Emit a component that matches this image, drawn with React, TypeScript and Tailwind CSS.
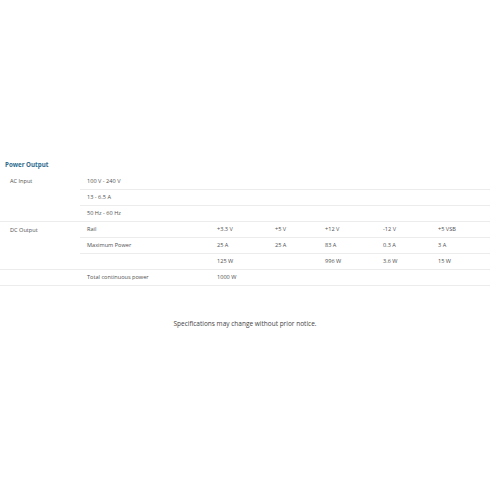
const rowLine = 'border-b border-[#ececec]';

function Row({ cells }: { cells: string[] }) {
  return (
    <tr className="h-[16px]">
      <td className={`${rowLine} pl-[7px]`}>{cells[0]}</td>
      {cells.slice(1).map((c, i) => (
        <td key={i} className={`${rowLine} pl-[7px] whitespace-nowrap`}>
          {c}
        </td>
      ))}
    </tr>
  );
}

export default function App() {
  return (
    <div className="w-[500px] h-[500px] bg-white text-[#505050] font-['Open_Sans',sans-serif]">
      <div className="pt-[159px] pl-[5px] text-[6.2px] font-bold text-[#2e6a8c] leading-[12px]">Power Output</div>
      <table className="mt-[2px] w-[490px] border-collapse text-[5.6px] leading-[8px] table-fixed">
        <colgroup>
          <col className="w-[80px]" />
          <col className="w-[130px]" />
          <col className="w-[58px]" />
          <col className="w-[50px]" />
          <col className="w-[58px]" />
          <col className="w-[55px]" />
          <col className="w-[59px]" />
        </colgroup>
        <tbody>
          <tr className="h-[16px]">
            <td rowSpan={3} className={`${rowLine} pl-[10px] align-top pt-[4px]`}>AC Input</td>
            <td colSpan={6} className={`${rowLine} pl-[7px]`}>100 V - 240 V</td>
          </tr>
          <tr className="h-[16px]">
            <td colSpan={6} className={`${rowLine} pl-[7px]`}>13 - 6.5 A</td>
          </tr>
          <tr className="h-[16px]">
            <td colSpan={6} className={`${rowLine} pl-[7px]`}>50 Hz - 60 Hz</td>
          </tr>
          <tr className="h-[16px]">
            <td rowSpan={3} className={`${rowLine} pl-[10px] align-top pt-[4px]`}>DC Output</td>
            <td className={`${rowLine} pl-[7px]`}>Rail</td>
            <td className={`${rowLine} pl-[7px]`}>+3.3 V</td>
            <td className={`${rowLine} pl-[7px]`}>+5 V</td>
            <td className={`${rowLine} pl-[7px]`}>+12 V</td>
            <td className={`${rowLine} pl-[7px]`}>-12 V</td>
            <td className={`${rowLine} pl-[7px]`}>+5 VSB</td>
          </tr>
          <Row cells={['Maximum Power', '25 A', '25 A', '83 A', '0.3 A', '3 A']} />
          <Row cells={['', '125 W', '', '996 W', '3.6 W', '15 W']} />
          <tr className="h-[16px]">
            <td className={rowLine}></td>
            <td className={`${rowLine} pl-[7px]`}>Total continuous power</td>
            <td colSpan={5} className={`${rowLine} pl-[7px]`}>1000 W</td>
          </tr>
        </tbody>
      </table>
      <p className="mt-[33px] text-center text-[6.5px] leading-[10px] text-[#444] ml-[-10px]">
        Specifications may change without prior notice.
      </p>
    </div>
  );
}
